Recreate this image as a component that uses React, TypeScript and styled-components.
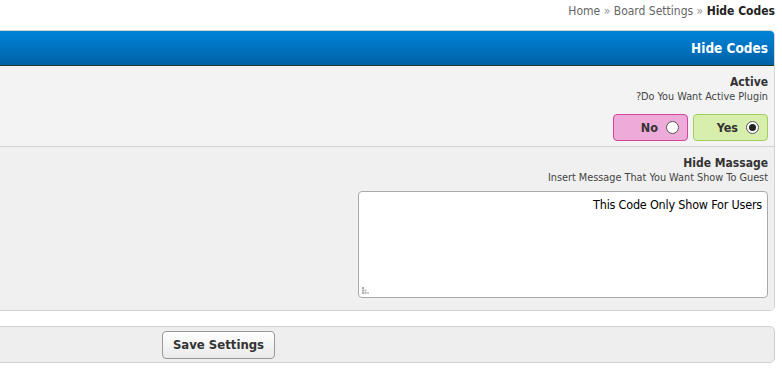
import styled, { createGlobalStyle } from "styled-components";

const GlobalStyle = createGlobalStyle`
  html, body {
    margin: 0;
    padding: 0;
    background: #fff;
    overflow: hidden;
  }
  body {
    font-family: "DejaVu Sans Condensed", "DejaVu Sans", Verdana, sans-serif;
    color: #333;
  }
`;

const Page = styled.div`
  direction: rtl;
  margin-left: -338px;
  margin-right: 7px;
`;

const Breadcrumb = styled.div`
  font-size: 12px;
  color: #666;
  padding: 4px 0 0;
  height: 26px;
  text-align: right;

  span {
    color: #999;
  }

  strong {
    color: #222;
  }
`;

const Panel = styled.div`
  border: 1px solid #d4d4d4;
  border-radius: 5px;
  background: #f3f3f3;
  overflow: hidden;
`;

const Header = styled.div`
  height: 34px;
  line-height: 34px;
  padding: 0 6px;
  background: linear-gradient(#0083d8, #0062a6);
  border-bottom: 1px solid #1f3a2c;
  color: #fff;
  font-size: 13.5px;
  font-weight: bold;
`;

const Row = styled.div<{ last?: boolean }>`
  padding: 9px 6px ${(p) => (p.last ? "12px" : "5px")};
  border-bottom: ${(p) => (p.last ? "none" : "1px solid #d2d2d2")};
  background: ${(p) => (p.last ? "#f0f0f0" : "#f3f3f3")};
`;

const Title = styled.div`
  font-size: 12px;
  font-weight: bold;
  color: #333;
`;

const Hint = styled.div`
  font-size: 10.8px;
  line-height: 13px;
  color: #444;
  margin-top: 1px;
`;

const Choices = styled.div`
  display: flex;
  gap: 5px;
  margin-top: 11px;
`;

const Choice = styled.label<{ tone: "yes" | "no" }>`
  display: flex;
  align-items: center;
  gap: 8px;
  box-sizing: border-box;
  width: 75px;
  height: 27px;
  padding: 0 8px;
  border-radius: 4px;
  border: 1px solid ${(p) => (p.tone === "yes" ? "#9fd05c" : "#d2469c")};
  background: ${(p) => (p.tone === "yes" ? "#d8eeac" : "#eeaad8")};
  font-size: 12.5px;
  font-weight: bold;
  color: #333;
`;

const Dot = styled.span<{ checked?: boolean }>`
  width: 13px;
  height: 13px;
  box-sizing: border-box;
  border-radius: 50%;
  border: 1px solid #555;
  background: #fff;
  display: flex;
  align-items: center;
  justify-content: center;

  &::after {
    content: "";
    width: 7px;
    height: 7px;
    border-radius: 50%;
    background: ${(p) => (p.checked ? "#222" : "transparent")};
  }
`;

const AreaWrap = styled.div`
  position: relative;
  width: 410px;
  margin-top: 7px;
`;

const TextArea = styled.textarea`
  display: block;
  box-sizing: border-box;
  width: 410px;
  height: 107px;
  padding: 5px 5px;
  border: 1px solid #a9a9a9;
  border-radius: 4px;
  background: #fff;
  resize: none;
  font-family: "DejaVu Sans Condensed", "DejaVu Sans", Verdana, sans-serif;
  font-size: 12.5px;
  letter-spacing: -0.2px;
  color: #000;
  direction: rtl;
  outline: none;
`;

const Grip = styled.svg`
  position: absolute;
  left: 4px;
  bottom: 4px;
`;

const Footer = styled.div`
  margin-top: 15px;
  height: 35px;
  border: 1px solid #d0d0d0;
  border-radius: 5px;
  background: #eeeeee;
  display: flex;
  align-items: center;
  justify-content: center;
`;

const SaveButton = styled.button`
  height: 28px;
  padding: 0 10px;
  border: 1px solid #999;
  border-radius: 4px;
  background: linear-gradient(#ffffff, #e9e9e9);
  font-family: "DejaVu Sans Condensed", "DejaVu Sans", Verdana, sans-serif;
  font-size: 13px;
  font-weight: bold;
  color: #333;
`;

function App() {
  return (
    <>
      <GlobalStyle />
      <Page>
        <Breadcrumb>
          <bdi>
            Home <span>»</span> Board Settings <span>»</span> <strong>Hide Codes</strong>
          </bdi>
        </Breadcrumb>
        <Panel>
          <Header>Hide Codes</Header>
          <Row>
            <Title>Active</Title>
            <Hint>Do You Want Active Plugin?</Hint>
            <Choices>
              <Choice tone="yes">
                <Dot checked />
                Yes
              </Choice>
              <Choice tone="no">
                <Dot />
                No
              </Choice>
            </Choices>
          </Row>
          <Row last>
            <Title>Hide Massage</Title>
            <Hint>Insert Message That You Want Show To Guest</Hint>
            <AreaWrap>
              <TextArea defaultValue="This Code Only Show For Users" />
              <Grip width="7" height="7" viewBox="0 0 7 7">
                <rect x="0" y="0" width="2" height="2" fill="#aaa" />
                <rect x="0" y="2.5" width="2" height="2" fill="#aaa" />
                <rect x="2.5" y="2.5" width="2" height="2" fill="#bbb" />
                <rect x="0" y="5" width="2" height="2" fill="#aaa" />
                <rect x="2.5" y="5" width="2" height="2" fill="#bbb" />
                <rect x="5" y="5" width="2" height="2" fill="#ccc" />
              </Grip>
            </AreaWrap>
          </Row>
        </Panel>
        <Footer>
          <SaveButton>Save Settings</SaveButton>
        </Footer>
      </Page>
    </>
  );
}

export default App;
